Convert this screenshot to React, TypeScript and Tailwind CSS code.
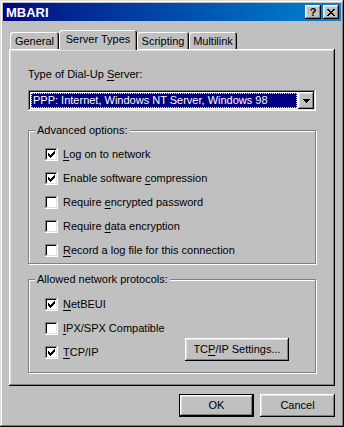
import React from 'react';

const raised =
  'shadow-[inset_-1px_-1px_#000,inset_1px_1px_#fff,inset_-2px_-2px_#808080,inset_2px_2px_#dfdfdf]';
const sunken =
  'shadow-[inset_-1px_-1px_#fff,inset_1px_1px_#808080,inset_-2px_-2px_#dfdfdf,inset_2px_2px_#0a0a0a]';

interface CheckRowProps {
  checked: boolean;
  children: React.ReactNode;
}

const CheckBox: React.FC<{ checked: boolean }> = ({ checked }) => (
  <span className={`w-[13px] h-[13px] shrink-0 bg-white flex items-center justify-center ${sunken}`}>
    {checked && (
      <svg width="7" height="7" viewBox="0 0 7 7" shapeRendering="crispEdges">
        <path
          d="M6 0h1v1h-1z M5 1h2v1h-2z M0 2h1v1h-1z M4 2h3v1h-3z M0 3h2v1h-2z M3 3h3v1h-3z M0 4h5v1h-5z M1 5h3v1h-3z M2 6h1v1h-1z"
          fill="#000"
        />
      </svg>
    )}
  </span>
);

const CheckRow: React.FC<CheckRowProps> = ({ checked, children }) => (
  <div className="h-[24px] flex items-center gap-[5px]">
    <CheckBox checked={checked} />
    <span>{children}</span>
  </div>
);

const Key: React.FC<{ children: React.ReactNode }> = ({ children }) => (
  <span className="underline underline-offset-[2px]">{children}</span>
);

const GroupBox: React.FC<{ title: string; className?: string; children: React.ReactNode }> = ({
  title,
  className = '',
  children
}) => (
  <fieldset
    className={`border border-[#808080] shadow-[1px_1px_0_#fff,inset_1px_1px_0_#fff] ${className}`}
  >
    <legend className="ml-[6px] px-[2px] bg-[#c0c0c0] leading-[13px]">{title}</legend>
    {children}
  </fieldset>
);

const Tab: React.FC<{ label: string; width: string; selected?: boolean }> = ({ label, width, selected }) => (
  <div
    className={`${width} ${
      selected ? 'h-[20px] -mb-[1px] relative z-10' : 'h-[17px]'
    } bg-[#c0c0c0] rounded-t-[3px] pt-[3px] text-center shadow-[inset_1px_1px_#fff,inset_-1px_0_#000,inset_-2px_0_#808080]`}
  >
    {label}
  </div>
);

const Button: React.FC<{ width: string; isDefault?: boolean; children: React.ReactNode; className?: string }> = ({
  width,
  isDefault,
  children,
  className = ''
}) => (
  <button
    className={`${width} h-[23px] bg-[#c0c0c0] flex items-center justify-center ${
      isDefault
        ? 'shadow-[inset_0_0_0_1px_#000,inset_-2px_-2px_#000,inset_2px_2px_#fff,inset_-3px_-3px_#808080,inset_3px_3px_#dfdfdf]'
        : raised
    } ${className}`}
  >
    {children}
  </button>
);

export default function App() {
  return (
    <div className="w-[344px] h-[427px] bg-[#c0c0c0] p-[3px] flex flex-col text-[11px] leading-[13px] text-black font-['Liberation_Sans',Arial,sans-serif] shadow-[inset_-1px_-1px_#000,inset_1px_1px_#dfdfdf,inset_-2px_-2px_#808080,inset_2px_2px_#fff]">
      {/* Title bar */}
      <div className="h-[18px] bg-linear-to-r from-[#000080] to-[#1084d0] flex items-center pl-[3px] pr-[2px]">
        <span className="text-white font-bold text-[13px]">MBARI</span>
        <div className="ml-auto flex gap-[2px]">
          <div className={`w-[16px] h-[14px] bg-[#c0c0c0] flex items-center justify-center font-bold text-[11px] leading-[11px] pt-[1px] ${raised}`}>
            ?
          </div>
          <div className={`w-[16px] h-[14px] bg-[#c0c0c0] flex items-center justify-center ${raised}`}>
            <svg width="8" height="7" viewBox="0 0 8 7" shapeRendering="crispEdges">
              <path
                d="M0 0h2v1h-2z M6 0h2v1h-2z M1 1h2v1h-2z M5 1h2v1h-2z M2 2h4v1h-4z M3 3h2v1h-2z M2 4h4v1h-4z M1 5h2v1h-2z M5 5h2v1h-2z M0 6h2v1h-2z M6 6h2v1h-2z"
                fill="#000"
              />
            </svg>
          </div>
        </div>
      </div>

      <div className="flex flex-col px-[6px] pt-[9px]">
        {/* Tabs */}
        <div className="flex items-end ml-[1px]">
          <Tab label="General" width="w-[49px]" />
          <Tab label="Server Types" width="w-[78px]" selected />
          <Tab label="Scripting" width="w-[52px]" />
          <Tab label="Multilink" width="w-[48px]" />
        </div>

        {/* Panel */}
        <div className={`h-[337px] pt-[19px] px-[19px] ${raised}`}>
          <div>
            Type of Dial-Up <Key>S</Key>erver:
          </div>
          <div className={`mt-[9px] h-[21px] bg-white p-[2px] flex ${sunken}`}>
            <div className="flex-1 p-[1px] flex">
              <div className="flex-1 bg-[#000080] text-white border border-dotted border-[#e8e8a8] pl-[1px]">
                PPP: Internet, Windows NT Server, Windows 98
              </div>
            </div>
            <div className={`w-[16px] h-[17px] bg-[#c0c0c0] flex items-center justify-center ${raised}`}>
              <svg width="7" height="4" viewBox="0 0 7 4" shapeRendering="crispEdges">
                <path d="M0 0h7v1h-7z M1 1h5v1h-5z M2 2h3v1h-3z M3 3h1v1h-1z" fill="#000" />
              </svg>
            </div>
          </div>

          <GroupBox title="Advanced options:" className="mt-[13px]">
            <div className="pl-[16px] pt-[5px] pb-[1px]">
              <CheckRow checked>
                <Key>L</Key>og on to network
              </CheckRow>
              <CheckRow checked>
                Enable software <Key>c</Key>ompression
              </CheckRow>
              <CheckRow checked={false}>
                Require <Key>e</Key>ncrypted password
              </CheckRow>
              <CheckRow checked={false}>
                Require <Key>d</Key>ata encryption
              </CheckRow>
              <CheckRow checked={false}>
                <Key>R</Key>ecord a log file for this connection
              </CheckRow>
            </div>
          </GroupBox>

          <GroupBox title="Allowed network protocols:" className="mt-[9px]">
            <div className="pl-[16px] pt-[6px] pb-[8px]">
              <CheckRow checked>
                <Key>N</Key>etBEUI
              </CheckRow>
              <CheckRow checked={false}>
                <Key>I</Key>PX/SPX Compatible
              </CheckRow>
              <div className="flex items-start">
                <CheckRow checked>
                  <Key>T</Key>CP/IP
                </CheckRow>
                <Button width="w-[104px]" className="ml-auto mr-[26px] -mt-[2px]">
                  TC<Key>P</Key>/IP Settings...
                </Button>
              </div>
            </div>
          </GroupBox>
        </div>

        {/* Dialog buttons */}
        <div className="mt-[8px] flex justify-end gap-[6px]">
          <Button width="w-[75px]" isDefault>
            OK
          </Button>
          <Button width="w-[75px]">Cancel</Button>
        </div>
      </div>
    </div>
  );
}
